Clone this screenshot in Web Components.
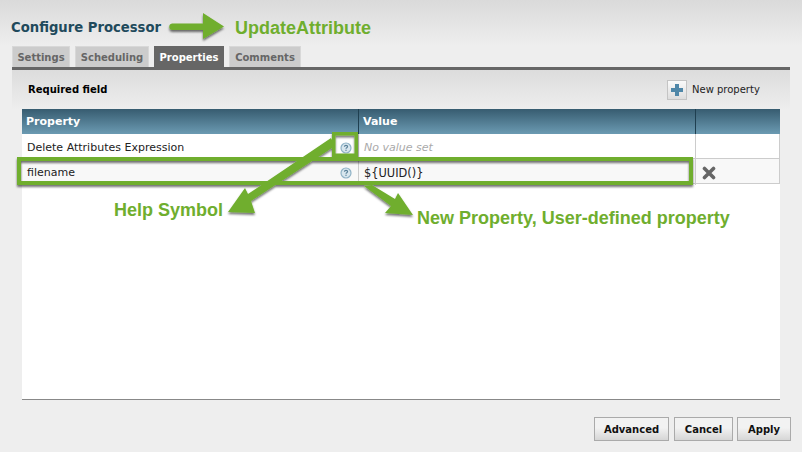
<!DOCTYPE html>
<html>
<head>
<meta charset="utf-8">
<style>
    html, body { margin: 0; height: 100%; background: #eeeeee; overflow: hidden; }
    body { font-family: "DejaVu Sans", Verdana, sans-serif; }
</style>
</head>
<body>
<config-dialog>
    <span slot="title">Configure Processor</span>
    <config-tabs slot="tabs">
        <config-tab style="width:56px">Settings</config-tab>
        <config-tab style="width:72px">Scheduling</config-tab>
        <config-tab style="width:68px" selected>Properties</config-tab>
        <config-tab style="width:70px">Comments</config-tab>
    </config-tabs>
    <property-panel slot="panel">
        <property-row name="Delete Attributes Expression" placeholder="No value set"></property-row>
        <property-row name="filename" value="${UUID()}" removable></property-row>
    </property-panel>
    <config-button slot="buttons" style="width:75px;margin-right:1px">Advanced</config-button>
    <config-button slot="buttons" style="width:59px">Cancel</config-button>
    <config-button slot="buttons" style="width:54px">Apply</config-button>
</config-dialog>
<callout-layer></callout-layer>

<script>
class ConfigDialog extends HTMLElement {
    connectedCallback() {
        if (this.shadowRoot) return;
        this.attachShadow({mode: "open"});
        this.shadowRoot.innerHTML = `
            <style>
                :host { display: flex; flex-direction: column; height: 452px; color: #000; }
                header {
                    height: 46px;
                    box-sizing: border-box;
                    padding: 19px 0 0 11px;
                    background: linear-gradient(#dadada, #eeeeee);
                    font-size: 13.2px;
                    line-height: 17px;
                    font-weight: bold;
                    color: #1f4a5c;
                }
                .tabs { margin: 0 12px; }
                .panel { margin: 0 12px; flex: 1; min-height: 0; }
                footer {
                    display: flex;
                    justify-content: flex-end;
                    gap: 4px;
                    padding: 0 11px 11px 0;
                }
            </style>
            <header><slot name="title"></slot></header>
            <div class="tabs"><slot name="tabs"></slot></div>
            <div class="panel"><slot name="panel"></slot></div>
            <footer><slot name="buttons"></slot></footer>
        `;
    }
}

class ConfigTabs extends HTMLElement {
    connectedCallback() {
        if (this.shadowRoot) return;
        this.attachShadow({mode: "open"});
        this.shadowRoot.innerHTML = `
            <style>
                :host { display: flex; gap: 5px; border-bottom: 3px solid #666666; }
            </style>
            <slot></slot>
        `;
    }
}

class ConfigTab extends HTMLElement {
    connectedCallback() {
        if (this.shadowRoot) return;
        this.attachShadow({mode: "open"});
        this.shadowRoot.innerHTML = `
            <style>
                :host {
                    display: block;
                    height: 20px;
                    border: solid #d8d8d8;
                    border-width: 1px 1px 0 1px;
                    background: #cccccc;
                    color: #666666;
                    font-size: 10px;
                    font-weight: bold;
                    line-height: 22px;
                    text-align: center;
                }
                :host([selected]) { background: #666666; border-color: #666666; color: #ffffff; }
            </style>
            <slot></slot>
        `;
    }
}

class PropertyPanel extends HTMLElement {
    connectedCallback() {
        if (this.shadowRoot) return;
        this.attachShadow({mode: "open"});
        this.shadowRoot.innerHTML = `
            <style>
                :host {
                    display: flex;
                    flex-direction: column;
                    height: 100%;
                    box-sizing: border-box;
                    padding: 0 10px 17px;
                    background: linear-gradient(#dcdcdc, #eeeeee 40px);
                }
                .bar { display: flex; align-items: center; height: 39px; }
                .req { flex: 1; padding-left: 6px; font-weight: bold; font-size: 10px; }
                .add {
                    width: 18px; height: 18px;
                    border: 1px solid #c4c4c4;
                    background: linear-gradient(#fafafa, #dddddd);
                    display: flex; align-items: center; justify-content: center;
                    margin-right: 5px;
                }
                .new { width: 88px; font-size: 10px; color: #222; }
                .table {
                    flex: 1;
                    background: #ffffff;
                    border-bottom: 1px solid #888888;
                }
                .head {
                    display: grid;
                    grid-template-columns: 337px 337px 1fr;
                    height: 25px;
                    background: linear-gradient(#375c70, #6b9ab2);
                    color: #ffffff;
                    font-size: 11px;
                    font-weight: bold;
                    line-height: 26px;
                }
                .head div { padding-left: 4px; border-right: 1px solid #1f3f50; box-sizing: border-box; }
                .head div:last-child { border-right: 0; }
            </style>
            <div class="bar">
                <span class="req">Required field</span>
                <span class="add">
                    <svg width="14" height="14" viewBox="0 0 14 14"><path d="M5 1h4v4h4v4H9v4H5V9H1V5h4z" fill="#4f87a8"/></svg>
                </span>
                <span class="new">New property</span>
            </div>
            <div class="table">
                <div class="head"><div>Property</div><div>Value</div><div></div></div>
                <slot></slot>
            </div>
        `;
    }
}

class PropertyRow extends HTMLElement {
    connectedCallback() {
        if (this.shadowRoot) return;
        this.attachShadow({mode: "open"});
        const value = this.getAttribute("value");
        const placeholder = this.getAttribute("placeholder");
        this.shadowRoot.innerHTML = `
            <style>
                :host {
                    display: grid;
                    grid-template-columns: 337px 337px 1fr;
                    height: 25px;
                    box-sizing: border-box;
                    border-bottom: 1px solid #cccccc;
                    font-size: 11px;
                    line-height: 24px;
                    color: #222222;
                }
                :host([removable]) { background: #f8f8f8; border-right: 1px solid #cccccc; }
                .cell { box-sizing: border-box; border-right: 1px solid #cccccc; padding: 1px 0 0 5px; display: flex; align-items: center; }
                :host([removable]) .cell:last-child { border-right: 0; }
                .name { flex: 1; padding-top: 1px; }
                .help { margin-right: 6px; display: block; }
                .empty { color: #aaaaaa; font-style: italic; padding-top: 1px; }
                .value { font-size: 11.4px; padding-top: 1px; }
                .remove { margin-left: 1px; display: block; }
            </style>
            <div class="cell">
                <span class="name">${this.getAttribute("name")}</span>
                <svg class="help" width="12" height="12" viewBox="0 0 12 12">
                    <circle cx="6" cy="6" r="5" fill="#d8e6ee" stroke="#8fb2c6" stroke-width="1.2"/>
                    <path d="M4.4 4.7C4.5 3.7 5.2 3.3 6 3.3c.9 0 1.6.5 1.6 1.3 0 1.1-1.6 1.1-1.6 2.2" fill="none" stroke="#5a8199" stroke-width="1.2"/>
                    <rect x="5.4" y="7.7" width="1.2" height="1.2" fill="#5a8199"/>
                </svg>
            </div>
            <div class="cell">${value !== null
                ? `<span class="value">${value}</span>`
                : `<span class="empty">${placeholder}</span>`}</div>
            <div class="cell">${this.hasAttribute("removable") ? `
                <svg class="remove" width="14" height="14" viewBox="0 0 14 14">
                    <path d="M2.5 2.500l9 9M11.500 2.500l-9 9" stroke="#666666" stroke-width="3.6" stroke-linecap="round"/>
                </svg>` : ""}</div>
        `;
    }
}

class ConfigButton extends HTMLElement {
    connectedCallback() {
        if (this.shadowRoot) return;
        this.attachShadow({mode: "open"});
        this.shadowRoot.innerHTML = `
            <style>
                :host {
                    display: block;
                    box-sizing: border-box;
                    height: 24px;
                    border: 1px solid #aaaaaa;
                    background: linear-gradient(#f2f2f2 45%, #d6d6d6);
                    font-size: 10px;
                    font-weight: bold;
                    line-height: 23px;
                    text-align: center;
                    color: #111111;
                }
            </style>
            <slot></slot>
        `;
    }
}

// green notes drawn on top of the screenshot
class CalloutLayer extends HTMLElement {
    connectedCallback() {
        if (this.shadowRoot) return;
        this.attachShadow({mode: "open"});
        this.shadowRoot.innerHTML = `
            <style>
                :host { position: absolute; left: 0; top: 0; width: 802px; height: 452px; pointer-events: none; }
                svg { position: absolute; left: 0; top: 0; }
                span {
                    position: absolute;
                    font-family: "Liberation Sans", Arial, sans-serif;
                    font-weight: bold;
                    color: #6fae2e;
                    white-space: nowrap;
                    font-size: 18px;
                    line-height: 24px;
                }
                .update { left: 235px; top: 16px; }
                .help { left: 114px; top: 198px; }
                .prop { left: 417px; top: 206px; }
            </style>
            <svg width="802" height="452" viewBox="0 0 802 452">
                <defs>
                    <filter id="drop" x="-10%" y="-10%" width="120%" height="130%">
                        <feDropShadow dx="0" dy="2" stdDeviation="1" flood-color="#000" flood-opacity=".55"/>
                    </filter>
                </defs>
                <g filter="url(#drop)" fill="#6fae2e">
                    <path d="M172 23.500h31V13l21 13.500-21 12.500V30h-31a3.300 3.300 0 0 1 0-6.500z"/>
                    <path d="M331 138l4 8-84 55 4 12-27-1 17-24 3 6z"/>
                    <path d="M364 186l8-1 23 14 3-6 15 22-28-2 6-7z"/>
                    <path fill-rule="evenodd" d="M332 132h26v25h-26zM335.500 135.500v18h19v-18z"/>
                    <path fill-rule="evenodd" d="M17 157h676v28H17zM21 161v20h668v-20z"/>
                </g>
            </svg>
            <span class="update">UpdateAttribute</span>
            <span class="help">Help Symbol</span>
            <span class="prop">New Property, User-defined property</span>
        `;
    }
}

customElements.define("config-dialog", ConfigDialog);
customElements.define("config-tabs", ConfigTabs);
customElements.define("config-tab", ConfigTab);
customElements.define("property-panel", PropertyPanel);
customElements.define("property-row", PropertyRow);
customElements.define("config-button", ConfigButton);
customElements.define("callout-layer", CalloutLayer);
</script>
</body>
</html>
